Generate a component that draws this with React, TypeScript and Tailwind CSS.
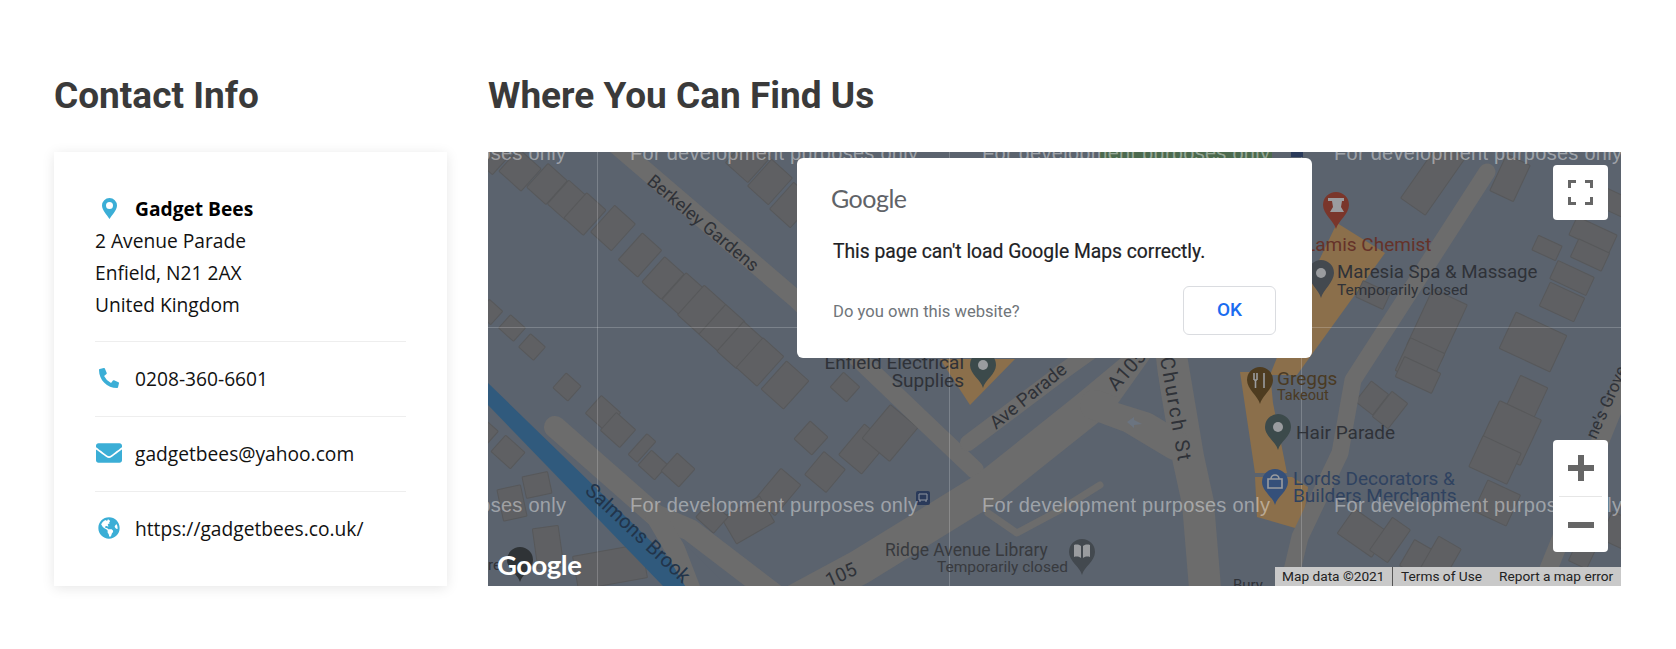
import { FaEnvelope, FaGlobeAmericas, FaPhoneAlt } from "react-icons/fa"

// [cx, cy, w, h, angle], in page coordinates
const buildings: number[][] = [
  [490, 155, 30, 26, 42], [520, 170, 30, 30, 42], [547, 184, 26, 32, 42], [567, 200, 24, 32, 42], [585, 214, 26, 34, 42],
  [613, 228, 28, 36, 42], [640, 255, 26, 36, 42], [663, 278, 26, 34, 42], [683, 294, 24, 36, 42], [702, 310, 30, 40, 42],
  [722, 328, 26, 40, 42], [740, 345, 26, 40, 42], [760, 362, 28, 40, 42], [785, 385, 30, 38, 42],
  [748, 160, 30, 34, 42], [770, 182, 28, 36, 42], [792, 205, 28, 36, 42],
  [490, 312, 18, 18, 42], [512, 328, 20, 18, 42], [532, 347, 20, 18, 42], [567, 387, 20, 20, 42],
  [508, 452, 26, 22, 42], [487, 432, 16, 16, 42], [603, 413, 26, 24, 42], [618, 430, 26, 24, 42], [642, 448, 12, 28, 42],
  [653, 465, 22, 20, 42], [678, 470, 24, 24, 42], [512, 503, 24, 32, -12], [537, 485, 26, 22, -12], [548, 547, 26, 40, -8],
  [610, 567, 70, 34, -10], [811, 438, 24, 24, 42], [845, 387, 22, 20, 42], [863, 449, 30, 40, 40], [825, 472, 28, 30, 40],
  [778, 492, 26, 40, 40], [748, 520, 44, 30, -30], [712, 517, 24, 22, 42], [890, 433, 36, 44, 40],
  [1510, 178, 26, 40, 25], [1547, 248, 26, 16, 25], [1593, 235, 44, 20, 25], [1590, 255, 34, 20, 25], [1572, 278, 40, 20, 25],
  [1562, 302, 38, 26, 25], [1533, 342, 56, 40, 25], [1437, 325, 38, 62, 25], [1420, 362, 38, 36, 25], [1373, 295, 30, 18, 25],
  [1433, 178, 30, 70, 35], [1613, 202, 30, 20, 25], [1418, 375, 40, 22, 25], [1372, 398, 22, 26, 38], [1390, 410, 20, 32, 38],
  [1527, 397, 30, 34, 25], [1510, 433, 46, 50, 25], [1495, 460, 42, 34, 25], [1497, 503, 36, 34, 25], [1363, 533, 42, 30, 35],
  [1390, 540, 22, 40, 35], [1420, 560, 30, 30, 30], [1440, 560, 26, 40, 30], [1583, 553, 20, 26, 25], [1617, 530, 24, 30, 25],
]

const pin = (cx: number, cy: number, r: number, tip: number) =>
  `M${cx} ${tip}C${cx - 2} ${tip - 8} ${cx - r} ${cy + r * 0.7} ${cx - r} ${cy}A${r} ${r} 0 1 1 ${cx + r} ${cy}C${cx + r} ${cy + r * 0.7} ${cx + 2} ${tip - 8} ${cx} ${tip}Z`

const Pin = ({ x, y, tip, fill, dot = false }: { x: number, y: number, tip: number, fill: string, dot?: boolean }) => (
  <g>
    <path d={pin(x, y, 13, tip)} fill={fill} />
    {dot && <circle cx={x} cy={y} r={5} fill="#9a9c9f" />}
  </g>
)

const devColumns = [278, 630, 982, 1334]

const MapCanvas = () => (
  <svg viewBox="488 152 1133 434" className="block w-full h-full font-['Roboto',sans-serif]">
    <rect x={488} y={152} width={1133} height={434} fill="#5b636e" />

    {/* poi areas */}
    <rect x={1100} y={152} width={172} height={7} fill="#4c6a4e" />
    <g fill="#8b6f4b">
      <polygon points="1337,223 1385,253 1297,375 1270,375 1300,300" />
      <polygon points="940,359 1015,359 970,405" />
      <polygon points="1240,372 1270,372 1273,403 1287,473 1255,473" />
      <polygon points="1255,477 1292,477 1308,487 1302,530 1257,517" />
    </g>

    {/* buildings */}
    <g fill="#5f6063" stroke="#57585a" strokeWidth={1}>
      {buildings.map(([cx, cy, w, h, a], i) => (
        <rect key={i} x={cx - w / 2} y={cy - h / 2} width={w} height={h} rx={1} transform={`rotate(${a} ${cx} ${cy})`} />
      ))}
    </g>

    {/* water */}
    <polygon points="488,383 697,586 663,586 488,405" fill="#305a7d" />

    {/* roads */}
    <g fill="none" stroke="#6c6c6c" strokeLinecap="round" strokeLinejoin="round">
      <polyline points="617,146 797,300 915,413 975,470" strokeWidth={18} />
      <polyline points="780,610 860,567 988,488 1087,409 1170,340" strokeWidth={35} />
      <polyline points="968,443 1065,370 1100,345" strokeWidth={16} />
      <polyline points="1170,350 1188,457 1198,503 1206,600" strokeWidth={32} />
      <polyline points="1095,405 1130,418 1175,445" strokeWidth={30} />
      <polyline points="1100,485 1060,510 1017,533 988,513" strokeWidth={7} />
      <polyline points="555,427 655,515 690,530 775,595" strokeWidth={22} />
      <polyline points="655,515 705,600" strokeWidth={20} />
      <polyline points="1487,172 1353,380 1340,453 1300,537 1285,600" strokeWidth={17} />
      <polyline points="1625,380 1540,590" strokeWidth={18} />
    </g>
    <polygon points="683,542 727,586 700,586" fill="#5b636e" />
    <polygon points="1118,403 1163,417 1156,358 1150,358" fill="#5b636e" />
    <polygon points="1127,422 1134,417 1134,420 1142,424 1134,425 1134,428" fill="#6b7480" />

    {/* tile seams */}
    <g stroke="#ffffff" strokeOpacity={0.2} strokeWidth={1}>
      <line x1={597.5} y1={152} x2={597.5} y2={586} />
      <line x1={949.5} y1={152} x2={949.5} y2={586} />
      <line x1={1301.5} y1={152} x2={1301.5} y2={586} />
      <line x1={488} y1={327.5} x2={1621} y2={327.5} />
    </g>

    {/* road names */}
    <g fill="#2f3238">
      <text x={646} y={183} fontSize={18} transform="rotate(40 646 183)">Berkeley Gardens</text>
      <text x={996} y={430} fontSize={18.5} transform="rotate(-39 996 430)">Ave Parade</text>
      <text x={1116} y={392} fontSize={20} transform="rotate(-48 1116 392)">A105</text>
      <text x={1160} y={358} fontSize={20} letterSpacing={2.3} transform="rotate(80 1160 358)">Church St</text>
      <text x={584} y={492} fontSize={20} fill="#22344a" transform="rotate(43 584 492)">Salmons Brook</text>
      <text x={829} y={587} fontSize={19} transform="rotate(-24 829 587)">105</text>
      <text x={1233} y={590} fontSize={15}>Bury</text>
      <text x={1596} y={440} fontSize={17} transform="rotate(-66 1596 440)">ne's Grove</text>
      <text x={488} y={570} fontSize={15}>re</text>
    </g>

    {/* places */}
    <g fontSize={19} fill="#2f3238">
      <text x={964} y={369} textAnchor="end">Enfield Electrical</text>
      <text x={964} y={387} textAnchor="end">Supplies</text>
      <text x={1305} y={251} fill="#653229">Lamis Chemist</text>
      <text x={1337} y={278} fontSize={18.7}>Maresia Spa &amp; Massage</text>
      <text x={1337} y={295} fontSize={15.5}>Temporarily closed</text>
      <text x={1277} y={385} fill="#4a3a23">Greggs</text>
      <text x={1277} y={400} fontSize={14.5} fill="#4a3a23">Takeout</text>
      <text x={1296} y={439}>Hair Parade</text>
      <text x={1293} y={485} fill="#2f4260">Lords Decorators &amp;</text>
      <text x={1293} y={502} fill="#2f4260">Builders Merchants</text>
      <text x={885} y={556} fontSize={17.5} fill="#383a3e">Ridge Avenue Library</text>
      <text x={937} y={572} fontSize={15.5} fill="#383a3e">Temporarily closed</text>
    </g>

    {/* pins */}
    <Pin x={983} y={365} tip={388} fill="#3c4a4b" dot />
    <Pin x={1336} y={205} tip={229} fill="#7a362b" />
    <path d="M1328 198h16v3h-2l-1 6 3 5h-14l3-5-1-6h-4z" fill="#9a9c9f" />
    <Pin x={1321} y={273} tip={298} fill="#43494f" dot />
    <Pin x={1260} y={380} tip={404} fill="#4e3c20" />
    <path d="M1254 373v7M1257 373v7M1254 380h3M1255.5 380v8M1264 373v15" stroke="#9a9c9f" strokeWidth={1.6} fill="none" />
    <Pin x={1278} y={427} tip={450} fill="#3c4a4b" dot />
    <Pin x={1275} y={482} tip={505} fill="#35507a" />
    <path d="M1268 479h14v9h-14zM1271 479a4 4 0 0 1 8 0" stroke="#9a9c9f" strokeWidth={1.6} fill="none" />
    <Pin x={1082} y={552} tip={575} fill="#43494f" />
    <path d="M1074 545c3-1 6 0 7 1v12c-1-1-4-2-7-1zM1090 545c-3-1-6 0-7 1v12c1-1 4-2 7-1z" fill="#9a9c9f" />
    <rect x={916} y={491} width={14} height={14} rx={2} fill="#2a3a5a" />
    <path d="M919 494h8v6h-8zM920 500v2M926 500v2" stroke="#8f95a0" strokeWidth={1} fill="none" />
    <rect x={1291} y={152} width={12} height={5} fill="#2a3a5a" />
    <Pin x={520} y={560} tip={582} fill="#2f3336" />

    {/* watermark */}
    <g fill="#ffffff" fillOpacity={0.42} fontSize={20} className="font-['Liberation_Sans',sans-serif]">
      {devColumns.map((x) => (
        <g key={x}>
          <text x={x} y={160} textLength={288}>For development purposes only</text>
          <text x={x} y={512} textLength={288}>For development purposes only</text>
        </g>
      ))}
    </g>
  </svg>
)

const MapView = () => (
  <div className="relative w-[1133px] h-[434px] overflow-hidden">
    <MapCanvas />

    <span className="absolute left-[9px] top-[394px] text-[27.5px] leading-[38px] font-bold tracking-[-0.5px] text-white font-['Lato',sans-serif]">Google</span>

    {/* error dialog */}
    <div className="absolute left-[309px] top-[6px] w-[515px] h-[200px] bg-white rounded-md font-['Roboto',sans-serif]">
      <div className="pl-[34px] pt-[22px] text-[25px] leading-[36px] text-[#5f6368] font-['Lato',sans-serif] tracking-[-0.5px]">Google</div>
      <p className="pl-[36px] mt-[23px] text-[19.3px] leading-[26px] text-[#202124] [-webkit-text-stroke:0.2px_#202124]">This page can't load Google Maps correctly.</p>
      <div className="flex items-center justify-between pl-[36px] pr-[36px] mt-[21px]">
        <span className="pt-[4px] text-[16.6px] text-[#70757a]">Do you own this website?</span>
        <button className="w-[93px] h-[49px] border border-[#dadce0] rounded-md bg-white text-[19px] font-medium text-[#1a6cf0]">OK</button>
      </div>
    </div>

    {/* fullscreen */}
    <button className="absolute left-[1065px] top-[13px] w-[55px] h-[55px] flex items-center justify-center bg-white rounded-sm">
      <svg width="25" height="25" viewBox="0 0 25 25" fill="none" stroke="#666666" strokeWidth="3">
        <path d="M1.5 8V1.5H8M17 1.5H23.5V8M1.5 17V23.5H8M17 23.5H23.5V17" />
      </svg>
    </button>

    {/* zoom */}
    <div className="absolute left-[1065px] top-[288px] w-[55px] h-[112px] flex flex-col bg-white rounded-sm">
      <div className="h-[56px] flex items-center justify-center">
        <svg width="26" height="26" viewBox="0 0 26 26" fill="#666666"><path d="M10 0h6v10h10v6H16v10h-6V16H0v-6h10z" /></svg>
      </div>
      <div className="h-px mx-[6px] bg-[#e6e6e6]" />
      <div className="flex-1 flex items-center justify-center">
        <svg width="26" height="6" viewBox="0 0 26 6" fill="#666666"><rect width="26" height="6" /></svg>
      </div>
    </div>

    {/* attribution */}
    <div className="absolute right-0 bottom-0 w-[346px] h-[19px] flex items-center bg-[#c9c9c9] text-[13.7px] leading-[19px] text-[#222222] font-['Roboto',sans-serif]">
      <span className="pl-[7px] w-[118px] border-r border-[#555555]">Map data ©2021</span>
      <span className="pl-[8px] w-[106px]">Terms of Use</span>
      <span>Report a map error</span>
    </div>
  </div>
)

const Row = ({ icon, children }: { icon: React.ReactNode, children: React.ReactNode }) => (
  <div className="flex items-center h-[75px] pb-px border-b border-[#eeeeee] last:border-b-0">
    <div className="w-[40px] flex justify-center pr-[12px] -mt-[2px]">{icon}</div>
    <span>{children}</span>
  </div>
)

export default function App() {
  return (
    <div className="flex gap-[41px] pl-[54px] pt-[74px] h-[649px] bg-white font-['Open_Sans',sans-serif]">
      <div className="w-[393px]">
        <h2 className="h-[43px] mb-[35px] text-[37px] leading-[43px] font-bold text-[#3a3a3a] font-['Roboto',sans-serif]">Contact Info</h2>
        <div className="h-[434px] bg-white shadow-[0_2px_12px_rgba(0,0,0,0.1)] pt-[41px] px-[41px] text-[19.2px] leading-[32px] text-[#111111]">
          <div className="pb-[20px] border-b border-[#eeeeee]">
            <div className="flex items-center">
              <div className="w-[40px] flex justify-center pr-[12px] -mt-[2px]">
                <svg width="15" height="21" viewBox="0 0 15 21">
                  <path fillRule="evenodd" fill="#3baed6" d="M7.5 0A7.5 7.5 0 0 0 0 7.5C0 12 5 17 7.5 21 10 17 15 12 15 7.5A7.5 7.5 0 0 0 7.5 0zm0 4a3.5 3.5 0 1 1 0 7 3.5 3.5 0 0 1 0-7z" />
                </svg>
              </div>
              <strong className="font-bold text-black">Gadget Bees</strong>
            </div>
            <div>2 Avenue Parade</div>
            <div>Enfield, N21 2AX</div>
            <div>United Kingdom</div>
          </div>
          <Row icon={<FaPhoneAlt className="text-[20px] text-[#3baed6]" />}>0208-360-6601</Row>
          <Row icon={<FaEnvelope className="text-[26px] text-[#3baed6]" />}>gadgetbees@yahoo.com</Row>
          <Row icon={<FaGlobeAmericas className="text-[22px] text-[#3baed6]" />}>https://gadgetbees.co.uk/</Row>
        </div>
      </div>
      <div className="w-[1133px]">
        <h2 className="h-[43px] mb-[35px] text-[37px] leading-[43px] font-bold text-[#3a3a3a] font-['Roboto',sans-serif]">Where You Can Find Us</h2>
        <MapView />
      </div>
    </div>
  )
}
